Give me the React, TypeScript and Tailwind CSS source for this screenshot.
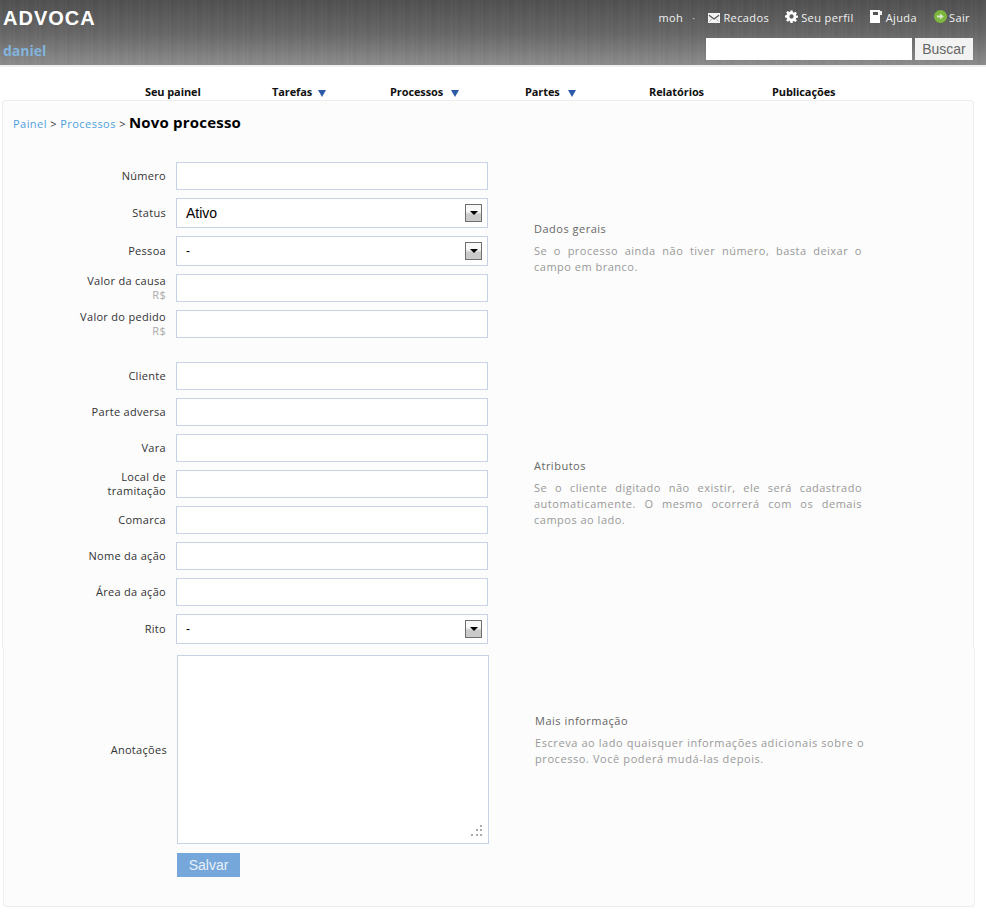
import { ReactNode } from "react";

const font = "font-['Open_Sans',sans-serif]";

function Mail() {
  return (
    <svg width="12" height="10" viewBox="0 0 12 10" className="mr-[3px]">
      <rect x="0" y="0" width="12" height="10" fill="#f4f4f4" />
      <path d="M1 2.2 L6 6 L11 2.2" fill="none" stroke="#555" strokeWidth="1.3" />
      <path d="M1.5 8.5 L4 5.5 M10.5 8.5 L8 5.5" fill="none" stroke="#999" strokeWidth="0.7" />
    </svg>
  );
}

function Gear() {
  return (
    <svg width="13" height="13" viewBox="0 0 24 24" className="mr-[3px] mb-[3px]">
      <path
        fill="#fff"
        fillRule="evenodd"
        d="M10 1h4l.6 3.2 1.9.8 2.7-1.9 2.8 2.8-1.9 2.7.8 1.9L24 10v4l-3.2.6-.8 1.9 1.9 2.7-2.8 2.8-2.7-1.9-1.9.8L14 24h-4l-.6-3.2-1.9-.8-2.7 1.9-2.8-2.8 1.9-2.7-.8-1.9L0 14v-4l3.2-.6.8-1.9-1.9-2.7 2.8-2.8 2.7 1.9 1.9-.8zM12 8a4 4 0 1 0 0 8 4 4 0 0 0 0-8z"
      />
    </svg>
  );
}

function Book() {
  return (
    <svg width="12" height="13" viewBox="0 0 12 13" className="mr-[4px] mb-[3px]">
      <path fill="#fff" d="M0 0h10v13H0z" />
      <path fill="#555" d="M3 2h5v3H3z" />
      <path fill="#eee" d="M10 1h2v4h-2z" />
    </svg>
  );
}

function Exit() {
  return (
    <svg width="13" height="13" viewBox="0 0 13 13" className="mr-[2px] mb-[3px]">
      <circle cx="6.5" cy="6.5" r="6.5" fill="#7cb63f" />
      <path fill="#d9e4cc" d="M3 5.5h3V3.5l3.8 3-3.8 3V7.5H3z" />
    </svg>
  );
}

function Tri({ tight }: { tight?: boolean }) {
  return (
    <span
      className={`mt-[2px] h-0 w-0 border-x-[4px] border-t-[7px] border-x-transparent border-t-[#2c5aa8] ${tight ? "ml-[6px]" : "ml-[8px]"}`}
    />
  );
}

function Label({ children, sub }: { children: ReactNode; sub?: string }) {
  return (
    <div className={`w-[173px] pr-[10px] text-right text-[11px] leading-[14px] tracking-[0.3px] text-[#333] ${font}`}>
      {children}
      {sub && <div className="text-[#aaa]">{sub}</div>}
    </div>
  );
}

function Field({ label, sub, mb = "mb-2" }: { label: ReactNode; sub?: string; mb?: string }) {
  return (
    <div className={`flex items-center ${mb}`}>
      <Label sub={sub}>{label}</Label>
      <input className="h-7 w-[312px] border border-[#c5d3e4] bg-white outline-none" />
    </div>
  );
}

function Picker({ value, large }: { value: string; large?: boolean }) {
  return (
    <div className="relative h-[30px] w-[312px]">
      <select
        defaultValue={value}
        className={`h-full w-full appearance-none rounded-none border border-[#c5d3e4] bg-white pl-[9px] font-['Liberation_Sans',sans-serif] text-black outline-none ${large ? "text-sm" : "text-xs"}`}
      >
        <option>{value}</option>
      </select>
      <div className="pointer-events-none absolute right-[6px] top-[6px] flex h-[18px] w-[17px] items-center justify-center border border-[#6e6e6e] bg-gradient-to-b from-[#f8f8f8] from-40% to-[#cacaca] to-60%">
        <span className="h-0 w-0 border-x-[4px] border-t-[4px] border-x-transparent border-t-black" />
      </div>
    </div>
  );
}

function SideNote({ title, children, className }: { title: string; children: ReactNode; className: string }) {
  return (
    <div className={`${font} ${className}`}>
      <div className="text-[11px] leading-4 tracking-[0.5px] text-[#666]">{title}</div>
      <p className="mt-[6px] text-justify text-[11px] leading-4 tracking-[0.5px] text-[#999]">{children}</p>
    </div>
  );
}

export default function App() {
  return (
    <div className="min-h-[920px] bg-white">
      <header className="h-[67px] border-b-2 border-[#f0f0f0] bg-[repeating-linear-gradient(90deg,rgba(255,255,255,0.02)_0px,rgba(255,255,255,0.025)_1px,rgba(0,0,0,0.025)_3px,rgba(0,0,0,0)_7px,rgba(255,255,255,0.02)_10px,rgba(0,0,0,0.02)_13px),linear-gradient(180deg,#505050_0%,#666666_50%,#8c8c8c_100%)]">
        <div className="flex h-[39px] items-start justify-between pl-[3px] pr-[16px]">
          <div className="mt-[6px] font-['Liberation_Sans',sans-serif] text-xl font-bold leading-6 tracking-[1px] text-white">ADVOCA</div>
          <nav className={`mt-[10px] flex items-center text-[11px] leading-4 tracking-[0.4px] text-[#f2f2f2] ${font}`}>
            <span>moh</span>
            <span className="ml-[9px] mr-[13px] text-[#ccc]">·</span>
            <Mail />
            <span>Recados</span>
            <span className="ml-[16px]" />
            <Gear />
            <span>Seu perfil</span>
            <span className="ml-[16px]" />
            <Book />
            <span>Ajuda</span>
            <span className="ml-[17px]" />
            <Exit />
            <span>Sair</span>
          </nav>
        </div>
        <div className="flex items-start justify-between pl-[3px] pr-[13px]">
          <div className={`mt-[2px] text-sm font-bold leading-5 text-[#82b4de] ${font}`}>daniel</div>
          <form className="mt-[-1px] flex gap-[3px]">
            <input className="h-[22px] w-[206px] bg-white outline-none" />
            <button type="button" className="h-[22px] w-[58px] bg-[#f2f2f2] font-['Liberation_Sans',sans-serif] text-sm text-[#666]">
              Buscar
            </button>
          </form>
        </div>
      </header>

      <nav className={`flex h-[33px] items-end pl-[145px] text-[11px] font-bold leading-4 tracking-[-0.1px] text-[#111] ${font}`}>
        <div className="w-[127px]">Seu painel</div>
        <div className="flex w-[118px] items-center">Tarefas<Tri tight /></div>
        <div className="flex w-[135px] items-center">Processos<Tri /></div>
        <div className="flex w-[124px] items-center">Partes<Tri /></div>
        <div className="w-[123px]">Relatórios</div>
        <div>Publicações</div>
      </nav>

      <section className="ml-[2px] h-[548px] w-[972px] rounded-t border border-b-0 border-[#eee] bg-[#fcfcfc]">
        <div className={`flex h-[61px] items-baseline gap-[3px] pl-[10px] pt-[11px] text-[11px] tracking-[0.45px] text-[#333] ${font}`}>
          <span><span className="text-[#4f9fe0]">Painel</span> &gt; <span className="text-[#4f9fe0]">Processos</span> &gt;</span>
          <span className="text-[15px] font-bold leading-5 tracking-[0.2px] text-black">Novo processo</span>
        </div>
        <div className="flex">
          <div className="w-[531px] shrink-0">
            <Field label="Número" />
            <div className="mb-2 flex items-center">
              <Label>Status</Label>
              <Picker value="Ativo" large />
            </div>
            <div className="mb-2 flex items-center">
              <Label>Pessoa</Label>
              <Picker value="-" />
            </div>
            <Field label="Valor da causa" sub="R$" />
            <Field label="Valor do pedido" sub="R$" mb="mb-6" />
            <Field label="Cliente" />
            <Field label="Parte adversa" />
            <Field label="Vara" />
            <Field label={<>Local de<br />tramitação</>} />
            <Field label="Comarca" />
            <Field label="Nome da ação" />
            <Field label="Área da ação" />
            <div className="flex items-center">
              <Label>Rito</Label>
              <Picker value="-" />
            </div>
          </div>
          <div>
            <SideNote title="Dados gerais" className="w-[328px] pt-[59px]">
              Se o processo ainda não tiver número, basta deixar o campo em branco.
            </SideNote>
            <SideNote title="Atributos" className="w-[328px] pt-[183px]">
              Se o cliente digitado não existir, ele será cadastrado automaticamente. O mesmo ocorrerá com os demais campos ao lado.
            </SideNote>
          </div>
        </div>
      </section>

      <section className="ml-[3px] h-[259px] w-[972px] rounded-b border border-t-0 border-[#eee] bg-[#fcfcfc] pt-[7px]">
        <div className="flex">
          <div className="w-[531px] shrink-0">
            <div className="flex items-center">
              <Label>Anotações</Label>
              <div className="relative">
                <textarea className="block h-[189px] w-[312px] resize-none border border-[#c5d3e4] bg-white outline-none" />
                <svg width="12" height="12" viewBox="0 0 12 12" className="pointer-events-none absolute bottom-[7px] right-[6px]">
                  <g fill="#aaa">
                    <rect x="9" y="0" width="2" height="2" />
                    <rect x="5" y="4" width="2" height="2" />
                    <rect x="9" y="4" width="2" height="2" />
                    <rect x="0" y="9" width="2" height="2" />
                    <rect x="5" y="9" width="2" height="2" />
                    <rect x="9" y="9" width="2" height="2" />
                  </g>
                </svg>
              </div>
            </div>
            <div className="ml-[173px] mt-[8px]">
              <button type="button" className="h-6 w-[63px] bg-[#76a7da] font-['Liberation_Sans',sans-serif] text-sm text-[#e8f0f8]">
                Salvar
              </button>
            </div>
          </div>
          <SideNote title="Mais informação" className="w-[332px] pt-[58px]">
            <span className="block text-left tracking-[0.58px]">
              Escreva ao lado quaisquer informações adicionais sobre o processo. Você poderá mudá-las depois.
            </span>
          </SideNote>
        </div>
      </section>
    </div>
  );
}
